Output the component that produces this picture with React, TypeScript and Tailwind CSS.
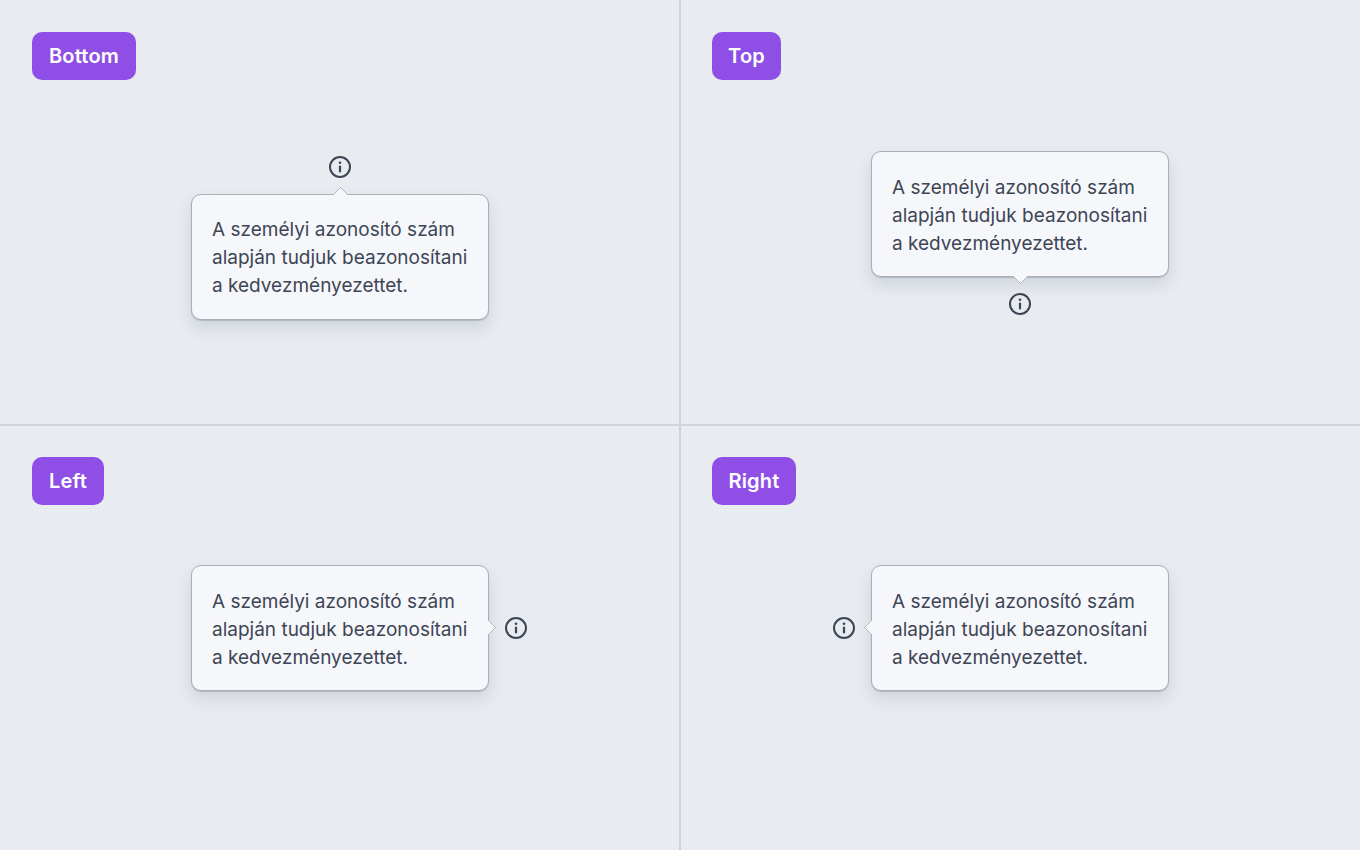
function Arrow({ className }: { className: string }) {
  return <span className={`absolute h-[11px] w-[11px] rotate-45 rounded-[1px] border-[#a9aeb9] bg-[#f6f7fb] ${className}`} />
}

function Bubble({ arrow, textPad = "pt-[22px] pb-[18px]" }: { arrow: string; textPad?: string }) {
  return (
    <div className={`relative w-[298px] shrink-0 rounded-[10px] border border-[#a9aeb9] bg-[#f6f7fb] px-5 text-[19px] leading-7 text-[#3d4555] shadow-[0_1px_1px_rgba(60,70,90,0.22),0_8px_16px_rgba(60,70,90,0.14)] ${textPad}`}>
      <Arrow className={arrow} />
      <p className="relative whitespace-nowrap">
        A személyi azonosító szám
        <br />
        alapján tudjuk beazonosítani
        <br />
        a kedvezményezettet.
      </p>
    </div>
  )
}

function Icon() {
  return (
    <svg viewBox="0 0 24 24" fill="none" stroke="currentColor" strokeWidth={2} className="h-6 w-6 shrink-0 text-[#3d4454]">
      <circle cx="12" cy="12" r="10" />
      <path d="M12 11.5V16.5" strokeLinecap="round" strokeWidth={2.2} />
      <circle cx="12" cy="7.8" r="1.3" fill="currentColor" stroke="none" />
    </svg>
  )
}

function Label({ children, width }: { children: string; width: string }) {
  return (
    <div className={`flex h-12 items-center justify-center self-start rounded-[10px] bg-[#8f4fe6] text-[20px] font-semibold tracking-[0.2px] text-white ${width}`}>
      {children}
    </div>
  )
}

export default function App() {
  return (
    <div className="grid h-[850px] w-[1360px] grid-cols-[681px_679px] grid-rows-[426px_424px] bg-[#e8ecf1] font-['Inter',sans-serif]">
      {/* Bottom */}
      <div className="flex flex-col border-r-2 border-b-2 border-[#cfd3da] p-8">
        <Label width="w-[104px]">Bottom</Label>
        <div className="mt-[75px] ml-[159px] flex w-[298px] flex-col items-center gap-[15px]">
          <Icon />
          <Bubble arrow="-top-[6px] left-[143px] border-t border-l" textPad="pt-[21px] pb-[19px]" />
        </div>
      </div>

      {/* Top */}
      <div className="flex flex-col border-b-2 border-[#cfd3da] py-8 pr-8 pl-[31px]">
        <Label width="w-[69px]">Top</Label>
        <div className="mt-[71px] ml-[159px] flex w-[298px] flex-col items-center gap-[15px]">
          <Bubble arrow="-bottom-[6px] left-[143px] border-r border-b" />
          <Icon />
        </div>
      </div>

      {/* Left */}
      <div className="flex flex-col border-r-2 border-[#cfd3da] px-8 pt-[31px] pb-8">
        <Label width="w-[72px]">Left</Label>
        <div className="mt-[60px] ml-[159px] flex items-center gap-[15px]">
          <Bubble arrow="-right-[6px] top-[56px] border-t border-r" />
          <Icon />
        </div>
      </div>

      {/* Right */}
      <div className="flex flex-col pt-[31px] pr-8 pb-8 pl-[31px]">
        <Label width="w-[84px]">Right</Label>
        <div className="mt-[60px] ml-[120px] flex items-center gap-[15px]">
          <Icon />
          <Bubble arrow="-left-[6px] top-[56px] border-b border-l" />
        </div>
      </div>
    </div>
  )
}
